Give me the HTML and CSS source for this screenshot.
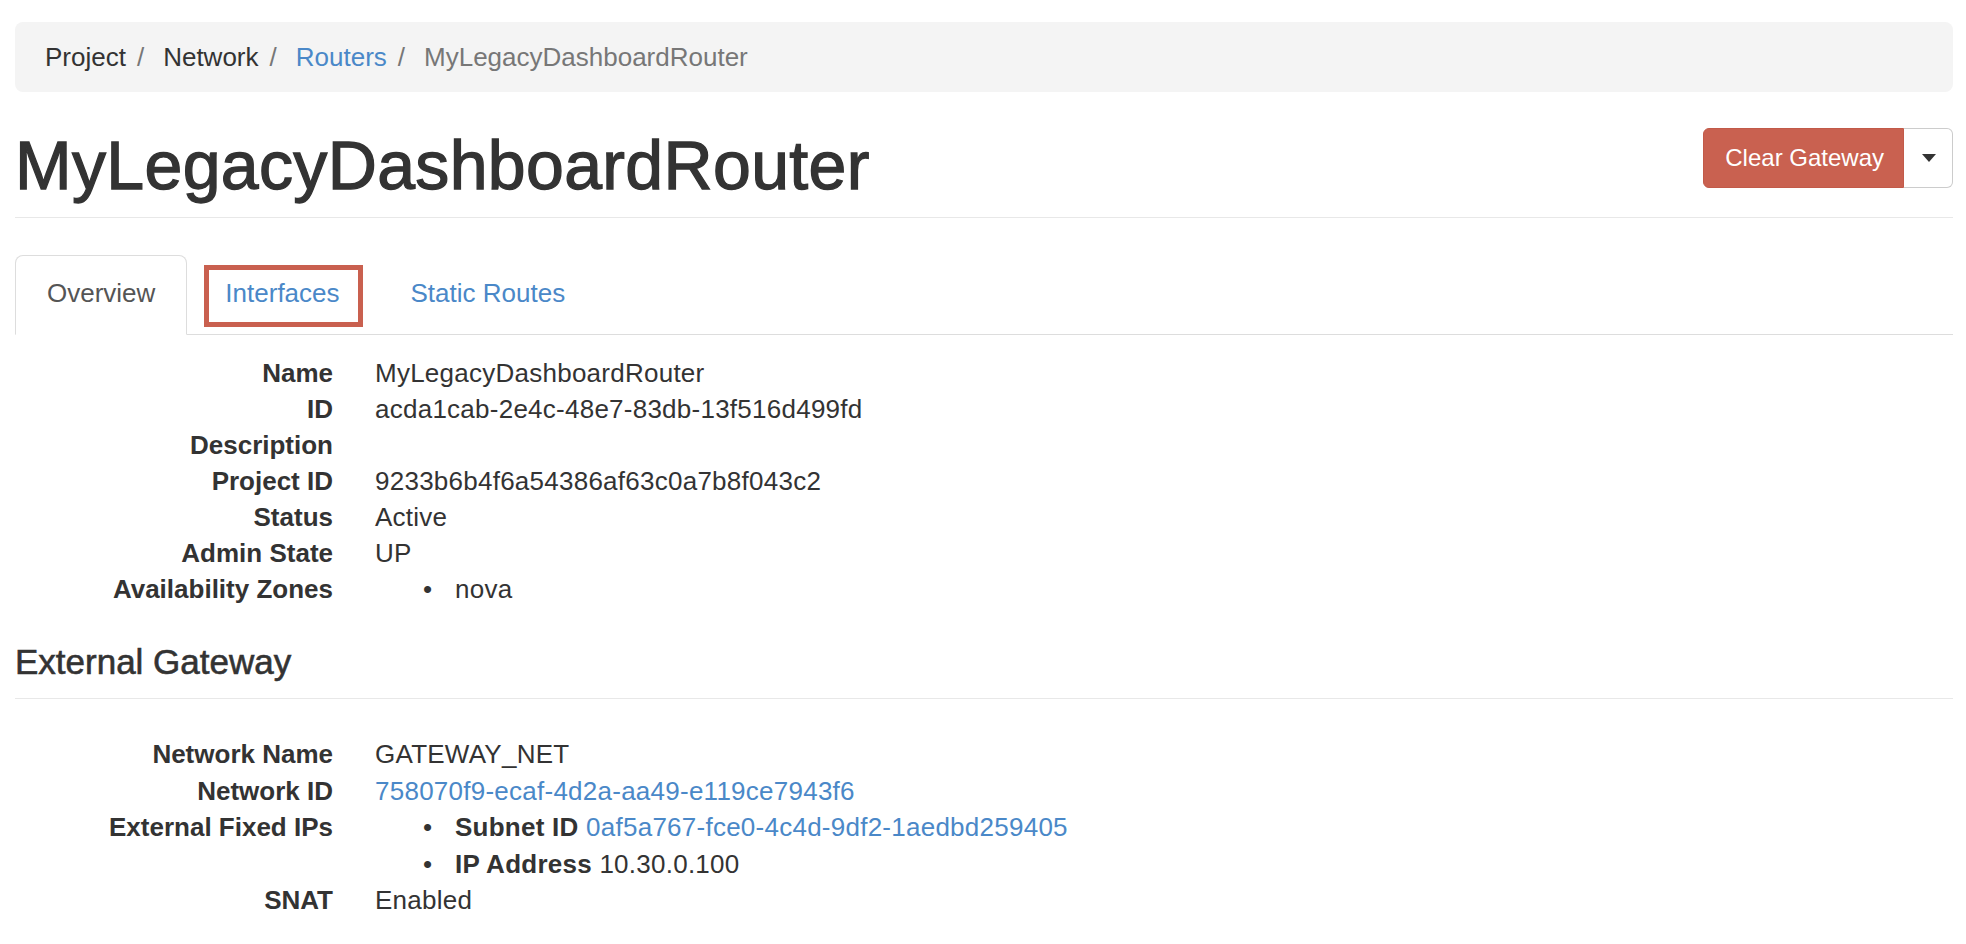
FILE: index.html
```html
<!DOCTYPE html>
<html lang="en">
<head>
<meta charset="utf-8">
<title>MyLegacyDashboardRouter</title>
<link rel="stylesheet" href="styles.css">
</head>
<body>
<div class="page">
  <ol class="breadcrumb">
    <li class="crumb">Project</li><li class="sep">/</li>
    <li class="crumb">Network</li><li class="sep">/</li>
    <li class="crumb"><a href="#">Routers</a></li><li class="sep">/</li>
    <li class="crumb current">MyLegacyDashboardRouter</li>
  </ol>

  <div class="page-header">
    <h1 class="title">MyLegacyDashboardRouter</h1>
    <div class="btn-group">
      <button class="btn btn-danger" type="button">Clear Gateway</button>
      <button class="btn btn-toggle" type="button"><span class="caret"></span></button>
    </div>
  </div>

  <ul class="nav-tabs">
    <li class="tab active"><a href="#">Overview</a></li>
    <li class="tab annotated"><a href="#">Interfaces</a><span class="highlight"></span></li>
    <li class="tab"><a href="#">Static Routes</a></li>
  </ul>

  <dl class="details first">
    <dt>Name</dt><dd>MyLegacyDashboardRouter</dd>
    <dt>ID</dt><dd>acda1cab-2e4c-48e7-83db-13f516d499fd</dd>
    <dt>Description</dt><dd></dd>
    <dt>Project ID</dt><dd>9233b6b4f6a54386af63c0a7b8f043c2</dd>
    <dt>Status</dt><dd>Active</dd>
    <dt>Admin State</dt><dd>UP</dd>
    <dt>Availability Zones</dt><dd><ul class="bullets"><li>nova</li></ul></dd>
  </dl>

  <h4 class="section-header">External Gateway</h4>

  <dl class="details second">
    <dt>Network Name</dt><dd>GATEWAY_NET</dd>
    <dt>Network ID</dt><dd><a href="#">758070f9-ecaf-4d2a-aa49-e119ce7943f6</a></dd>
    <dt>External Fixed IPs</dt>
    <dd>
      <ul class="bullets">
        <li><strong>Subnet ID</strong>&nbsp;<a href="#">0af5a767-fce0-4c4d-9df2-1aedbd259405</a></li>
        <li><strong>IP Address</strong>&nbsp;10.30.0.100</li>
      </ul>
    </dd>
    <dt>SNAT</dt><dd>Enabled</dd>
  </dl>
</div>
</body>
</html>
```

FILE: styles.css
```css
html, body {
  margin: 0;
  padding: 0;
  background: #ffffff;
}

body {
  font-family: "Liberation Sans", Arial, Helvetica, sans-serif;
  font-size: 26px;
  line-height: 37px;
  color: #333333;
}

a {
  color: #4a88c8;
  text-decoration: none;
}

.page {
  padding: 22px 13px 0 15px;
}

/* Breadcrumb */
.breadcrumb {
  display: flex;
  align-items: baseline;
  list-style: none;
  margin: 0;
  padding: 16.5px 30px;
  background: #f4f4f4;
  border-radius: 8px;
}

.breadcrumb .sep {
  color: #777777;
  margin: 0 19px 0 11px;
}

.breadcrumb .current {
  color: #777777;
}

/* Page header */
.page-header {
  display: flex;
  justify-content: space-between;
  align-items: flex-start;
  margin-top: 36px;
  padding-bottom: 14px;
  border-bottom: 1px solid #e8e8e8;
}

.title {
  margin: 0;
  font-size: 68px;
  line-height: 75px;
  font-weight: normal;
  color: #333333;
  -webkit-text-stroke: 1.3px #333333;
  letter-spacing: 0.35px;
}

.btn-group {
  display: flex;
}

.btn {
  font-family: "Liberation Sans", Arial, Helvetica, sans-serif;
  height: 60px;
  margin: 0;
  cursor: pointer;
}

.btn-danger {
  background: #c96150;
  border: 1px solid #c25a49;
  color: #ffffff;
  font-size: 24px;
  padding: 0 19px 0 21px;
  border-radius: 6px 0 0 6px;
}

.btn-toggle {
  width: 49px;
  background: #ffffff;
  border: 1px solid #cccccc;
  border-left: none;
  border-radius: 0 6px 6px 0;
  display: flex;
  align-items: center;
  justify-content: center;
  padding: 0;
}

.caret {
  width: 0;
  height: 0;
  border-left: 7px solid transparent;
  border-right: 7px solid transparent;
  border-top: 8px solid #333333;
  margin-left: 1px;
}

/* Tabs */
.nav-tabs {
  display: flex;
  list-style: none;
  margin: 37px 0 0;
  padding: 0;
  border-bottom: 1px solid #dddddd;
}

.tab {
  position: relative;
  margin-right: 5px;
  margin-bottom: -1px;
}

.tab a {
  display: block;
  padding: 19px 32px 22px;
  border: 1px solid transparent;
  border-radius: 8px 8px 0 0;
  color: #4a88c8;
}

.tab.active a {
  padding: 19px 31px 22px;
  color: #555555;
  background: #ffffff;
  border-color: #dddddd #dddddd transparent;
}

.highlight {
  position: absolute;
  top: 10px;
  bottom: 8px;
  left: 12px;
  right: 10px;
  border: 5px solid #c9604f;
  pointer-events: none;
}

/* Detail lists */
.details {
  display: grid;
  grid-template-columns: 318px 1fr;
  column-gap: 42px;
  margin: 20px 0 0;
  line-height: 36px;
}

.details dt {
  font-weight: bold;
  text-align: right;
  white-space: nowrap;
}

.details dd {
  margin: 0;
  min-height: 36px;
  letter-spacing: 0.25px;
}

.bullets {
  list-style: none;
  margin: 0;
  padding-left: 48px;
}

.bullets li {
  display: flex;
}

.bullets li::before {
  content: "\2022";
  flex: 0 0 32px;
}

.second {
  margin-top: 37px;
  line-height: 36.6px;
}

.second dd {
  min-height: 36.6px;
}

.section-header {
  margin: 36px 0 0;
  font-size: 35px;
  line-height: 37px;
  font-weight: normal;
  color: #333333;
  -webkit-text-stroke: 0.6px #333333;
  padding-bottom: 18px;
  border-bottom: 1px solid #e8e8e8;
}
```
